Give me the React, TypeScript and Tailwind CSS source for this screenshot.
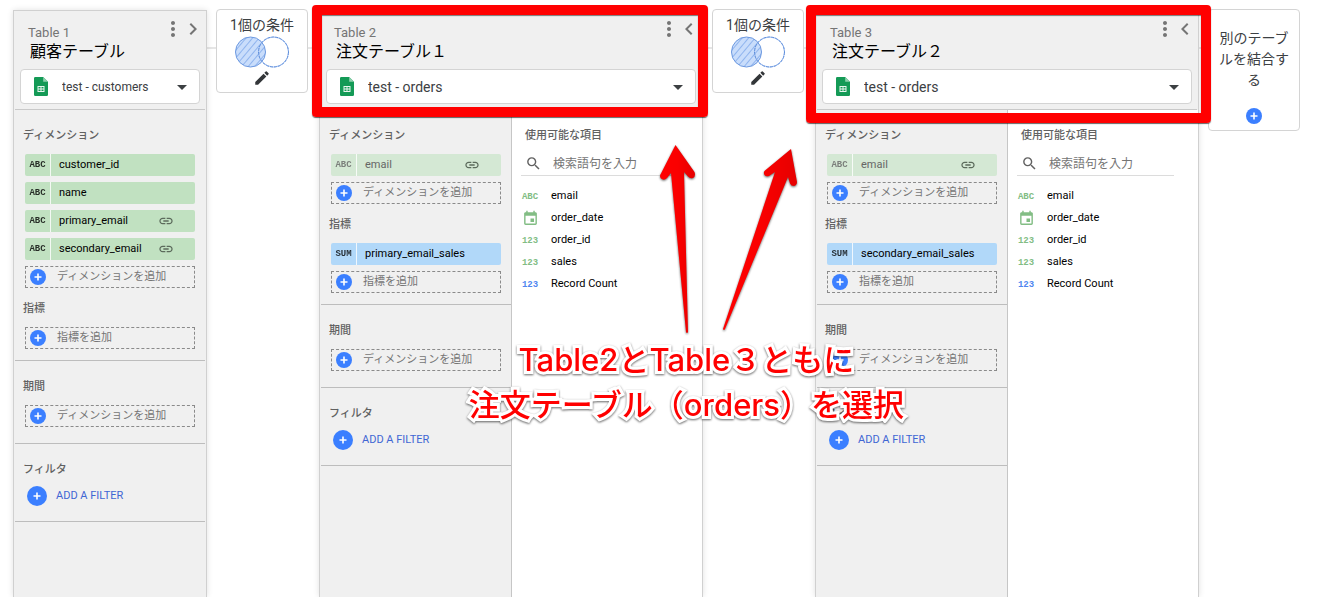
import { useState } from "react"
import {
  MdArrowDropDown,
  MdChevronLeft,
  MdChevronRight,
  MdEdit,
  MdEvent,
  MdLink,
  MdMoreVert,
  MdSearch,
} from "react-icons/md"

type FieldType = "ABC" | "123" | "DATE" | "SUM"

interface Field {
  name: string
  type: FieldType
  linked?: boolean
  muted?: boolean
}

interface AvailableField {
  name: string
  type: FieldType
  metric?: boolean
}

interface TableConfig {
  id: number
  name: string
  source: string
  dimensions: Field[]
  metrics: Field[]
  available?: AvailableField[]
  highlight?: string
}

const ORDER_FIELDS: AvailableField[] = [
  { name: "email", type: "ABC" },
  { name: "order_date", type: "DATE" },
  { name: "order_id", type: "123" },
  { name: "sales", type: "123" },
  { name: "Record Count", type: "123", metric: true },
]

const TABLES: TableConfig[] = [
  {
    id: 1,
    name: "顧客テーブル",
    source: "test - customers",
    dimensions: [
      { name: "customer_id", type: "ABC" },
      { name: "name", type: "ABC" },
      { name: "primary_email", type: "ABC", linked: true },
      { name: "secondary_email", type: "ABC", linked: true },
    ],
    metrics: [],
  },
  {
    id: 2,
    name: "注文テーブル１",
    source: "test - orders",
    dimensions: [{ name: "email", type: "ABC", linked: true, muted: true }],
    metrics: [{ name: "primary_email_sales", type: "SUM" }],
    available: ORDER_FIELDS,
    highlight: "-left-2 -right-1.5 -top-1.5 h-[112px]",
  },
  {
    id: 3,
    name: "注文テーブル２",
    source: "test - orders",
    dimensions: [{ name: "email", type: "ABC", linked: true, muted: true }],
    metrics: [{ name: "secondary_email_sales", type: "SUM" }],
    available: ORDER_FIELDS,
    highlight: "-left-2.5 -right-[13px] -top-1.5 h-[118px]",
  },
]

function SheetIcon() {
  return (
    <svg width="14" height="19" viewBox="0 0 14 19" className="pointer-events-none absolute left-3.5 top-2">
      <path d="M1.3 0H9.2L14 4.8V17.7A1.3 1.3 0 0 1 12.7 19H1.3A1.3 1.3 0 0 1 0 17.7V1.3A1.3 1.3 0 0 1 1.3 0Z" fill="#149a56" />
      <path d="M9.2 0L14 4.8H9.2Z" fill="#8fd1ae" />
      <path d="M3.5 9h7v6h-7ZM4.5 10v1.5h2V10Zm3 0v1.5h2V10Zm-3 2.5V14h2v-1.5Zm3 0V14h2v-1.5Z" fill="#e9f6ef" fillRule="evenodd" />
    </svg>
  )
}

function VennIcon({ id }: { id: string }) {
  return (
    <svg width="56" height="32" viewBox="0 0 56 32" className="block">
      <defs>
        <pattern id={id} width="5" height="5" patternUnits="userSpaceOnUse" patternTransform="rotate(40)">
          <rect width="5" height="5" fill="#c9ddfb" />
          <rect width="1" height="5" fill="#8fb4ee" />
        </pattern>
      </defs>
      <circle cx="16.5" cy="16" r="15" fill={`url(#${id})`} stroke="#6b98e0" />
      <circle cx="39.5" cy="16" r="15" fill="none" stroke="#a9c4f2" />
      <circle cx="39.5" cy="16" r="15" fill="none" stroke="#5f8fdc" strokeDasharray="3 1" />
    </svg>
  )
}

function PlusDot({ large }: { large?: boolean }) {
  return (
    <svg viewBox={large ? "-10 -10 20 20" : "-8 -8 16 16"} className={`shrink-0 ${large ? "size-5" : "size-4"}`}>
      <circle r={large ? 10 : 8} fill="#3b7fff" />
      <path d="M0-3.5V3.5M-3.5 0H3.5" stroke="#fff" strokeWidth="1.6" />
    </svg>
  )
}

function Chip({ field }: { field: Field }) {
  const color =
    field.type === "SUM" ? "bg-[#b1d8f9] text-black" : field.muted ? "bg-[#d4e8d4] text-[#666]" : "bg-[#c1e1c1] text-black"
  return (
    <button className={`flex h-[22px] w-full items-center overflow-hidden rounded-xs text-left ${color}`}>
      <span className="flex h-full w-[26px] shrink-0 items-center justify-center border-r border-white pt-0.5 font-['Liberation_Mono'] text-[9px] font-bold opacity-80">
        {field.type}
      </span>
      <span className="flex-1 pl-2 text-[11px] leading-4">{field.name}</span>
      {field.linked && <MdLink size={16} className="mr-[21px] text-[#5c6b5c]" />}
    </button>
  )
}

function AddField({ text }: { text: string }) {
  return (
    <button className="flex h-[22px] w-full items-center border border-dashed border-[#8a8a8a] pl-1 text-left text-[11px] leading-4 text-[#757575]">
      <PlusDot />
      <span className="pl-[11px]">{text}</span>
    </button>
  )
}

function SectionLabel({ children }: { children: string }) {
  return <h3 className="mt-3 h-[17px] px-[9px] text-[11px] font-medium leading-[17px] text-[#616161]">{children}</h3>
}

function FieldList({ fields, addText }: { fields: Field[]; addText: string }) {
  return (
    <div className="mt-2.5 flex flex-col gap-1.5 px-[11px]">
      {fields.map((f) => (
        <Chip key={f.name} field={f} />
      ))}
      <AddField text={addText} />
    </div>
  )
}

function ConfigColumn({ table }: { table: TableConfig }) {
  return (
    <div className="w-48 shrink-0 bg-[#f0f0f0]">
      <section className="mx-px border-b border-[#bdbdbd] pb-[11px] pt-[5px]">
        <div className="-mx-px">
          <SectionLabel>ディメンション</SectionLabel>
          <FieldList fields={table.dimensions} addText="ディメンションを追加" />
          <SectionLabel>指標</SectionLabel>
          <FieldList fields={table.metrics} addText="指標を追加" />
        </div>
      </section>
      <section className="mx-px border-b border-[#bdbdbd] pb-4 pt-[5px]">
        <div className="-mx-px">
          <SectionLabel>期間</SectionLabel>
          <FieldList fields={[]} addText="ディメンションを追加" />
        </div>
      </section>
      <section className="mx-px border-b border-[#bdbdbd] pb-[15px] pt-[5px]">
        <div className="-mx-px">
          <SectionLabel>フィルタ</SectionLabel>
          <button className="mt-2 ml-[13px] flex items-center gap-[9px] text-[11px] leading-4 text-[#3f66d4]">
            <PlusDot large />
            ADD A FILTER
          </button>
        </div>
      </section>
    </div>
  )
}

function AvailableColumn({ fields }: { fields: AvailableField[] }) {
  const [query, setQuery] = useState("")
  const shown = fields.filter((f) => f.name.toLowerCase().includes(query.toLowerCase()))

  return (
    <div className="-ml-px min-w-0 flex-1 border-l border-[#c6c6c6] bg-white pl-[9px] pr-6 pt-[5px]">
      <h3 className="mt-3 h-[17px] pl-1 text-[11px] font-medium leading-[17px] text-[#616161]">使用可能な項目</h3>
      <label className="mt-2 flex h-6 items-center border-b border-[#dcdcdc] pl-1">
        <MdSearch size={17} className="shrink-0 text-[#616161]" />
        <input
          aria-label="検索語句を入力"
          value={query}
          onChange={(e) => setQuery(e.target.value)}
          placeholder="検索語句を入力"
          className="ml-[11px] h-5 w-full min-w-0 bg-transparent text-xs leading-5 text-black outline-none placeholder:text-[#757575]"
        />
      </label>
      <ul className="pt-[9px]">
        {shown.map((f) => (
          <li key={f.name} className="flex h-[22px] items-center text-[11px] leading-4 text-black">
            <span
              className={`flex w-[18px] shrink-0 items-center justify-center pt-px font-['Liberation_Mono'] text-[9px] font-bold ${
                f.metric ? "text-[#4f86f0]" : "text-[#82bd84]"
              }`}
            >
              {f.type === "DATE" ? <MdEvent size={17} /> : f.type}
            </span>
            <span className="pl-3">{f.name}</span>
          </li>
        ))}
      </ul>
    </div>
  )
}

function TableCard({ table }: { table: TableConfig }) {
  const expanded = !!table.available
  return (
    <article
      className={`relative mt-px flex flex-col border border-b-0 border-[#d0d0d0] bg-[#f0f0f0] shadow-[0_0_6px_rgba(0,0,0,0.12)] ${
        expanded ? "min-w-[384px] flex-1" : "w-[194px] shrink-0"
      }`}
    >
      <header className="mx-px border-b border-[#c9c9c9] px-[5px] pb-[5px] pt-[13px]">
        <div className="flex justify-between">
          <div className="min-w-0 flex-1 pl-2">
            <label htmlFor={`name-${table.id}`} className="block text-[13px] leading-[18px] text-[#757575]">
              Table {table.id}
            </label>
            <input
              id={`name-${table.id}`}
              defaultValue={table.name}
              className="block h-5 w-full bg-transparent pl-0.5 text-base leading-5 text-black outline-none"
            />
          </div>
          <div className="-mt-[7px] -mr-px flex h-6 text-[#757575]">
            <button aria-label="メニュー" className="-mr-1">
              <MdMoreVert size={24} />
            </button>
            <button aria-label={expanded ? "折りたたむ" : "展開"} className="-mr-1">
              {expanded ? <MdChevronLeft size={24} /> : <MdChevronRight size={24} />}
            </button>
          </div>
        </div>
        <div className="relative mt-[7px]">
          <select
            aria-label="データソース"
            className={`h-[35px] w-full appearance-none rounded border border-[#d4d4d4] bg-white pl-[41px] pr-8 text-[#3c4043] outline-none ${
              expanded ? "text-sm" : "text-xs"
            }`}
          >
            <option>{table.source}</option>
          </select>
          <SheetIcon />
          <MdArrowDropDown size={24} className="pointer-events-none absolute right-1.5 top-1.5 text-[#3c4043]" />
        </div>
      </header>
      <div className="flex flex-1">
        <ConfigColumn table={table} />
        {table.available && <AvailableColumn fields={table.available} />}
      </div>
      {table.highlight && (
        <div
          className={`pointer-events-none absolute z-10 rounded border-10 border-[#ff0000] shadow-[0_1px_1px_rgba(0,0,0,0.6),inset_0_1px_1px_rgba(0,0,0,0.5)] ${table.highlight}`}
        />
      )}
    </article>
  )
}

function JoinButton({ id }: { id: string }) {
  return (
    <div className="flex shrink-0 items-start">
      <span className="mt-[38px] h-0.5 w-[9px] bg-[#e6e6e6]" />
      <button className="flex h-[84px] w-[92px] flex-col items-center rounded border border-[#d4d4d4] bg-white pt-1 text-sm leading-[22px] text-[#3c4043]">
        1個の条件
        <VennIcon id={id} />
        <MdEdit size={18} className="mt-px text-[#333639]" />
      </button>
      <span className="mt-[38px] h-0.5 w-[11px] bg-[#e6e6e6]" />
    </div>
  )
}

function Annotation() {
  return (
    <div className="pointer-events-none absolute inset-0 z-20">
      <svg
        width="150"
        height="200"
        viewBox="0 0 150 200"
        className="absolute left-1/2 top-[140px] overflow-visible drop-shadow-[0_1px_1px_rgba(0,0,0,0.6)]"
      >
        <defs>
          <linearGradient id="arrow" x1="0" x2="1">
            <stop offset="0" stopColor="#ff0000" />
            <stop offset="0.5" stopColor="#fa0000" />
            <stop offset="1" stopColor="#e60000" />
          </linearGradient>
        </defs>
        <path
          d="M15.5 5L34.5 32Q36 36 33 38Q30 39 28 36.5L24 32L28 192Q27 194 26 192L11 33L7 38Q4 41 1 38.5Q-1 36 1 33.5Z"
          fill="url(#arrow)"
        />
        <path
          d="M131 9L137 42Q137 45 134 46Q131 46 130 43.5L128 37L65 189Q64 191 63 189L115 32L109 36Q106 37 104.5 35Q103 32 105 30.5Z"
          fill="url(#arrow)"
        />
      </svg>
      <p className="absolute left-[52%] top-[337px] w-max -translate-x-1/2 text-center font-[Inter,'Noto_Sans_CJK_JP',sans-serif] text-[31px] font-medium leading-[45px] text-[#ff0000] drop-shadow-[0_1px_1px_rgba(0,0,0,0.6)] [-webkit-text-stroke:6px_white] [paint-order:stroke_fill]">
        Table2とTable３ともに
        <br />
        注文テーブル（orders）を選択
      </p>
    </div>
  )
}

export default function App() {
  return (
    <main
      lang="ja"
      className="relative flex min-h-screen bg-white pl-[13px] pr-5 pt-[9px] font-[Roboto,'Noto_Sans_CJK_JP',sans-serif]"
    >
      <TableCard table={TABLES[0]} />
      <JoinButton id="join-1" />
      <TableCard table={TABLES[1]} />
      <JoinButton id="join-2" />
      <TableCard table={TABLES[2]} />
      <span className="mt-[38px] h-0.5 w-[9px] shrink-0 bg-[#e6e6e6]" />
      <button className="flex h-[122px] w-[92px] shrink-0 flex-col items-center gap-[17px] rounded border border-[#d4d4d4] bg-white px-[9px] pt-[18px] text-center text-sm leading-[21px] text-[#3c4043]">
        別のテーブルを結合する
        <PlusDot />
      </button>
      <Annotation />
    </main>
  )
}
